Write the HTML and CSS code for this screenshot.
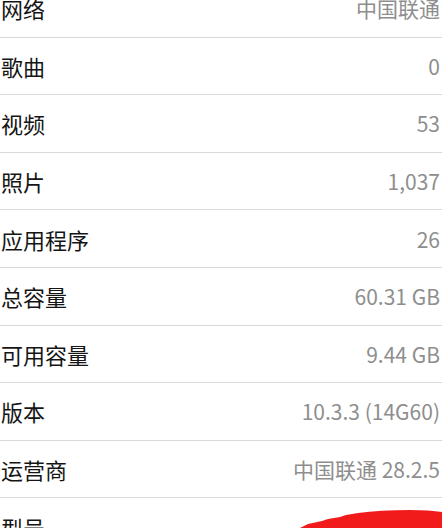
FILE: index.html
```html
<!DOCTYPE html>
<html lang="zh-CN">
<head>
    <meta charset="UTF-8">
    <meta name="viewport" content="width=device-width, initial-scale=1.0">
    <title>关于本机</title>
    <link rel="stylesheet" href="styles.css">
</head>
<body>
    <div class="about-list">
        <div class="row"><span class="label">网络</span><span class="value">中国联通</span></div>
        <div class="row"><span class="label">歌曲</span><span class="value">0</span></div>
        <div class="row"><span class="label">视频</span><span class="value">53</span></div>
        <div class="row"><span class="label">照片</span><span class="value">1,037</span></div>
        <div class="row"><span class="label">应用程序</span><span class="value">26</span></div>
        <div class="row"><span class="label">总容量</span><span class="value">60.31 GB</span></div>
        <div class="row"><span class="label">可用容量</span><span class="value">9.44 GB</span></div>
        <div class="row"><span class="label">版本</span><span class="value">10.3.3 (14G60)</span></div>
        <div class="row"><span class="label">运营商</span><span class="value">中国联通 28.2.5</span></div>
        <div class="row"><span class="label">型号</span><span class="value"></span></div>
    </div>

    <!-- 涂抹遮挡 -->
    <svg class="scribble" width="162" height="28" viewBox="0 0 162 28">
        <path d="M20 28 L28 24 L42 21 L48 19 L60 17 L66 15 L78 13 Q100 10 130 10 Q150 10 162 12 L162 28 Z" fill="#f21b1b"/>
    </svg>
</body>
</html>
```

FILE: styles.css
```css
body {
    margin: 0;
    background: #fff;
    font-family: "Noto Sans CJK SC", "Noto Sans", sans-serif;
    overflow: hidden;
    position: relative;
    height: 528px;
}

.about-list {
    margin-top: -20px;
}

.row {
    display: flex;
    justify-content: space-between;
    align-items: center;
    height: 56.6px;
    border-bottom: 1px solid #d9d9d9;
    padding: 0 2px 0 1px;
}

.label {
    font-size: 22px;
    color: #151515;
}

.value {
    font-size: 21px;
    color: #8e8e8e;
}

.scribble {
    position: absolute;
    left: 280px;
    top: 500px;
}
```
